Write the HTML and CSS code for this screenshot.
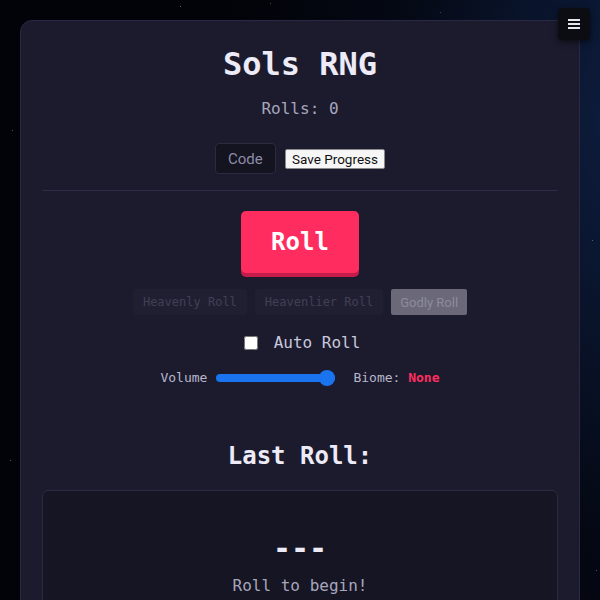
FILE: index.html
```html
<!DOCTYPE html>
<html>
<head>
<meta charset="utf-8">
<link rel="stylesheet" href="styles.css">
</head>
<body>
<div class="stars"></div>
<button class="menu-btn" aria-label="Menu">
  <svg width="12" height="10" viewBox="0 0 12 10"><rect x="0" y="0" width="12" height="2" fill="#e6e6ee"/><rect x="0" y="4" width="12" height="2" fill="#e6e6ee"/><rect x="0" y="8" width="12" height="2" fill="#e6e6ee"/></svg>
</button>
<main class="card">
  <h1 class="title">Sols RNG</h1>
  <div class="rolls">Rolls: 0</div>
  <div class="code-row">
    <input class="code-input" type="text" placeholder="Code">
    <button class="save-btn">Save Progress</button>
  </div>
  <hr class="divider">
  <div class="roll-wrap"><button class="roll-btn">Roll</button></div>
  <div class="special-row">
    <button class="special-btn">Heavenly Roll</button>
    <button class="special-btn">Heavenlier Roll</button>
    <button class="godly-btn">Godly Roll</button>
  </div>
  <label class="auto-row"><input type="checkbox" class="auto-check"><span>Auto Roll</span></label>
  <div class="volume-row">
    <span>Volume</span>
    <input type="range" class="volume" min="0" max="1" step="0.01" value="1">
    <span class="biome">Biome: <b class="biome-name">None</b></span>
  </div>
  <h2 class="last-title">Last Roll:</h2>
  <div class="result">
    <div class="result-name">---</div>
    <div class="result-sub">Roll to begin!</div>
  </div>
</main>
</body>
</html>
```
FILE: styles.css
```css
html, body { height: 100%; }
body {
  margin: 0;
  padding: 20px 20px 0;
  box-sizing: border-box;
  font-family: "DejaVu Sans Mono", monospace;
  background:
    radial-gradient(ellipse 420px 700px at 640px 120px, rgba(18,40,85,0.75), rgba(10,20,45,0.3) 60%, rgba(0,0,0,0) 100%),
    #020308;
  overflow: hidden;
}
.stars {
  position: fixed;
  left: 0; top: 0;
  width: 1px; height: 1px;
  background: transparent;
  box-shadow:
    180px 6px 0 0 rgba(200,200,220,0.5),
    12px 130px 0 0 rgba(200,200,220,0.4),
    10px 460px 0 0 rgba(200,200,220,0.4),
    592px 240px 0 0 rgba(200,200,220,0.4),
    596px 570px 0 0 rgba(200,200,220,0.4),
    270px 3px 0 0 rgba(200,200,220,0.35),
    440px 12px 0 0 rgba(200,200,220,0.3);
}
.menu-btn {
  position: fixed;
  top: 8px; right: 10px;
  width: 32px; height: 32px;
  padding: 0;
  border: none;
  border-radius: 4px;
  background: #0c0c13;
  box-shadow: 0 2px 6px rgba(0,0,0,0.6);
  display: flex; align-items: center; justify-content: center;
}
.menu-btn svg { display: block; }
.card {
  background: #1c1b2e;
  border: 1px solid #2a2944;
  border-radius: 12px;
  padding: 23px 21px 40px;
  min-height: 700px;
  box-sizing: border-box;
  text-align: center;
}
.title {
  margin: 0;
  font-size: 32px;
  line-height: 40px;
  font-weight: bold;
  color: #ecebf7;
}
.rolls {
  margin-top: 15px;
  font-size: 16px;
  line-height: 20px;
  color: #a7a6bd;
}
.code-row {
  margin-top: 24px;
  display: flex;
  justify-content: center;
  align-items: center;
  gap: 9px;
}
.code-input {
  width: 61px; height: 31px;
  box-sizing: border-box;
  background: #141320;
  border: 1px solid #2b2a40;
  border-radius: 4px;
  font-family: Roboto, sans-serif;
  font-size: 15px;
  color: #ccc;
  padding: 0 0 0 12px;
  outline: none;
}
.code-input::placeholder { color: #8d8ca6; }
.save-btn {
  font-family: Roboto, "Liberation Sans", sans-serif;
  font-size: 13.5px;
  color: #111;
  background: #f6f6f6;
  border: 1px solid #8a8a8a;
  border-radius: 2px;
  padding: 0 6px;
  height: 20px;
  line-height: 18px;
}
.divider {
  margin: 16px 0 0;
  border: none;
  height: 1px;
  background: #2e2d4a;
}
.roll-wrap {
  margin-top: 20px;
  display: flex;
  justify-content: center;
}
.roll-btn {
  width: 118px; height: 62px;
  border: none;
  border-radius: 5px;
  background: #ff2d5f;
  box-shadow: 0 4px 0 #c51c4b;
  color: #ffffff;
  font-family: "DejaVu Sans Mono", monospace;
  font-weight: bold;
  font-size: 24px;
}
.special-row {
  margin-top: 16px;
  display: flex;
  justify-content: center;
  gap: 8px;
}
.special-btn {
  height: 26px;
  padding: 0 10px;
  border: none;
  border-radius: 3px;
  background: #201f31;
  color: #403f56;
  font-family: "DejaVu Sans Mono", monospace;
  font-size: 12px;
}
.godly-btn {
  height: 26px;
  padding: 0 9px;
  border: none;
  border-radius: 2px;
  background: #6a6879;
  color: #8e8c9c;
  font-family: Roboto, sans-serif;
  font-size: 13px;
}
.auto-row {
  margin-top: 18px;
  display: flex;
  justify-content: center;
  align-items: center;
  gap: 16px;
  font-size: 16px;
  line-height: 20px;
  color: #c9c8dc;
}
.auto-check {
  margin: 0 0 0 4px;
  width: 14px; height: 14px;
}
.volume-row {
  margin-top: 17px;
  display: flex;
  justify-content: center;
  align-items: center;
  gap: 9px;
  font-size: 13px;
  line-height: 16px;
  color: #b8b7cc;
}
.volume {
  -webkit-appearance: none;
  appearance: none;
  width: 119px;
  height: 16px;
  margin: 0 9px 0 0;
  background: transparent;
}
.volume::-webkit-slider-runnable-track {
  height: 8px;
  border-radius: 4px;
  background: #1a74f0;
}
.volume::-webkit-slider-thumb {
  -webkit-appearance: none;
  width: 16px; height: 16px;
  margin-top: -4px;
  border-radius: 50%;
  background: #1a74f0;
}
.biome-name { color: #ff2d5f; font-weight: bold; }
.last-title {
  margin: 55px 0 0;
  font-size: 24px;
  line-height: 30px;
  font-weight: bold;
  color: #ecebf7;
}
.result {
  margin-top: 19px;
  background: #161523;
  border: 1px solid #2c2b44;
  border-radius: 6px;
  padding: 38px 20px 30px;
  min-height: 200px;
}
.result-name {
  font-size: 30px;
  line-height: 40px;
  font-weight: bold;
  color: #ecebf7;
}
.result-sub {
  margin-top: 7px;
  font-size: 16px;
  line-height: 20px;
  color: #a7a6bd;
}
```
